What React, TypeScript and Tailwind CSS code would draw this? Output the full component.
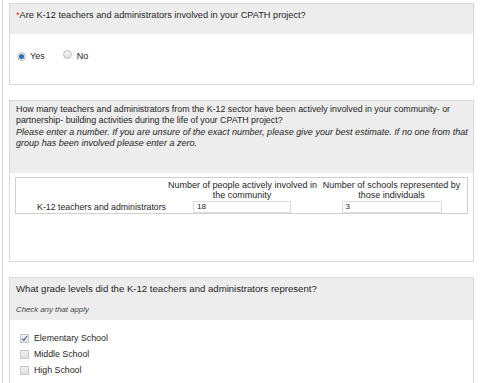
import React from "react";

function Radio({ checked }: { checked?: boolean }) {
  return (
    <span className="inline-flex h-[9px] w-[9px] items-center justify-center rounded-full border border-[#bdbdbd] bg-gradient-to-b from-[#f6f6f6] to-[#dedede]">
      {checked && <span className="h-[5px] w-[5px] rounded-full bg-[#2a6fb5]" />}
    </span>
  );
}

function Checkbox({ checked }: { checked?: boolean }) {
  return (
    <span className="inline-flex h-[9px] w-[9px] items-center justify-center border border-[#c8c8c8] bg-gradient-to-b from-[#f2f2f2] to-[#dedede]">
      {checked && (
        <svg width="7" height="7" viewBox="0 0 7 7">
          <path d="M1 3.6 L2.8 5.4 L6 1.2" stroke="#4a6fa5" strokeWidth="1.2" fill="none" />
        </svg>
      )}
    </span>
  );
}

export default function App() {
  return (
    <div
      className="h-[383px] w-[481px] overflow-hidden bg-white text-[9px] text-[#262626]"
      style={{ fontFamily: '"Liberation Sans", Arial, sans-serif' }}
    >
      <div className="ml-[2px] h-full border-l border-[#d8d8d8] pl-[6px] pr-[7px] pt-[3px]">
        {/* Panel 1 */}
        <div className="h-[82px] border border-[#d9d9d9]">
          <div className="h-[30px] bg-[#ededed] pl-[6px] pt-[6px] text-[9.2px] leading-[11px]">
            <span className="text-[#e0332c]">*</span>Are K-12 teachers and administrators involved in your CPATH project?
          </div>
          <div className="flex items-center pl-[7px] pt-[16px] leading-[11px]">
            <Radio checked />
            <span className="ml-[4px]">Yes</span>
            <span className="ml-[18px]">
              <Radio />
            </span>
            <span className="ml-[5px]">No</span>
          </div>
        </div>

        {/* Panel 2 */}
        <div className="mt-[15px] h-[162px] border border-[#d9d9d9]">
          <div className="h-[72px] whitespace-nowrap bg-[#ededed] pl-[6px] pt-[3px] leading-[11.3px]">
            <div className="text-[8.85px]">
              How many teachers and administrators from the K-12 sector have been actively involved in your community- or
              <br />
              partnership- building activities during the life of your CPATH project?
            </div>
            <div className="text-[9.05px] italic">
              Please enter a number. If you are unsure of the exact number, please give your best estimate. If no one from that
              <br />
              group has been involved please enter a zero.
            </div>
          </div>
          <div className="px-[5px] pt-[4px]">
            <div className="grid h-[37px] grid-cols-[152px_148px_1fr] whitespace-nowrap border border-[#d0d0d0] pt-[2px] leading-[10px]">
              <div />
              <div className="text-center">
                Number of people actively involved in
                <br />
                the community
              </div>
              <div className="text-center">
                Number of schools represented by
                <br />
                those individuals
              </div>
              <div className="flex h-[14px] items-center justify-end pr-[2px] text-[8.75px]">K-12 teachers and administrators</div>
              <div className="flex h-[14px] items-center justify-center">
                <div className="flex h-[12px] w-[98px] items-center border border-[#dcdcdc] pl-[3px] text-[8px]">18</div>
              </div>
              <div className="flex h-[14px] items-center justify-center">
                <div className="flex h-[12px] w-[100px] items-center border border-[#dcdcdc] pl-[3px] text-[8px]">3</div>
              </div>
            </div>
          </div>
        </div>

        {/* Panel 3 */}
        <div className="mt-[15px] h-[130px] border border-[#d9d9d9]">
          <div className="h-[42px] bg-[#ededed] pl-[6px] pt-[5px] leading-[11px]">
            <div className="text-[9.6px]">What grade levels did the K-12 teachers and administrators represent?</div>
            <div className="mt-[10px] text-[7.8px] italic text-[#444]">Check any that apply</div>
          </div>
          <div className="flex flex-col gap-[5px] pl-[10px] pt-[13px] text-[8.8px] leading-[11px]">
            <div className="flex items-center">
              <Checkbox checked />
              <span className="ml-[5px]">Elementary School</span>
            </div>
            <div className="flex items-center">
              <Checkbox />
              <span className="ml-[5px]">Middle School</span>
            </div>
            <div className="flex items-center">
              <Checkbox />
              <span className="ml-[5px]">High School</span>
            </div>
          </div>
        </div>
      </div>
    </div>
  );
}
